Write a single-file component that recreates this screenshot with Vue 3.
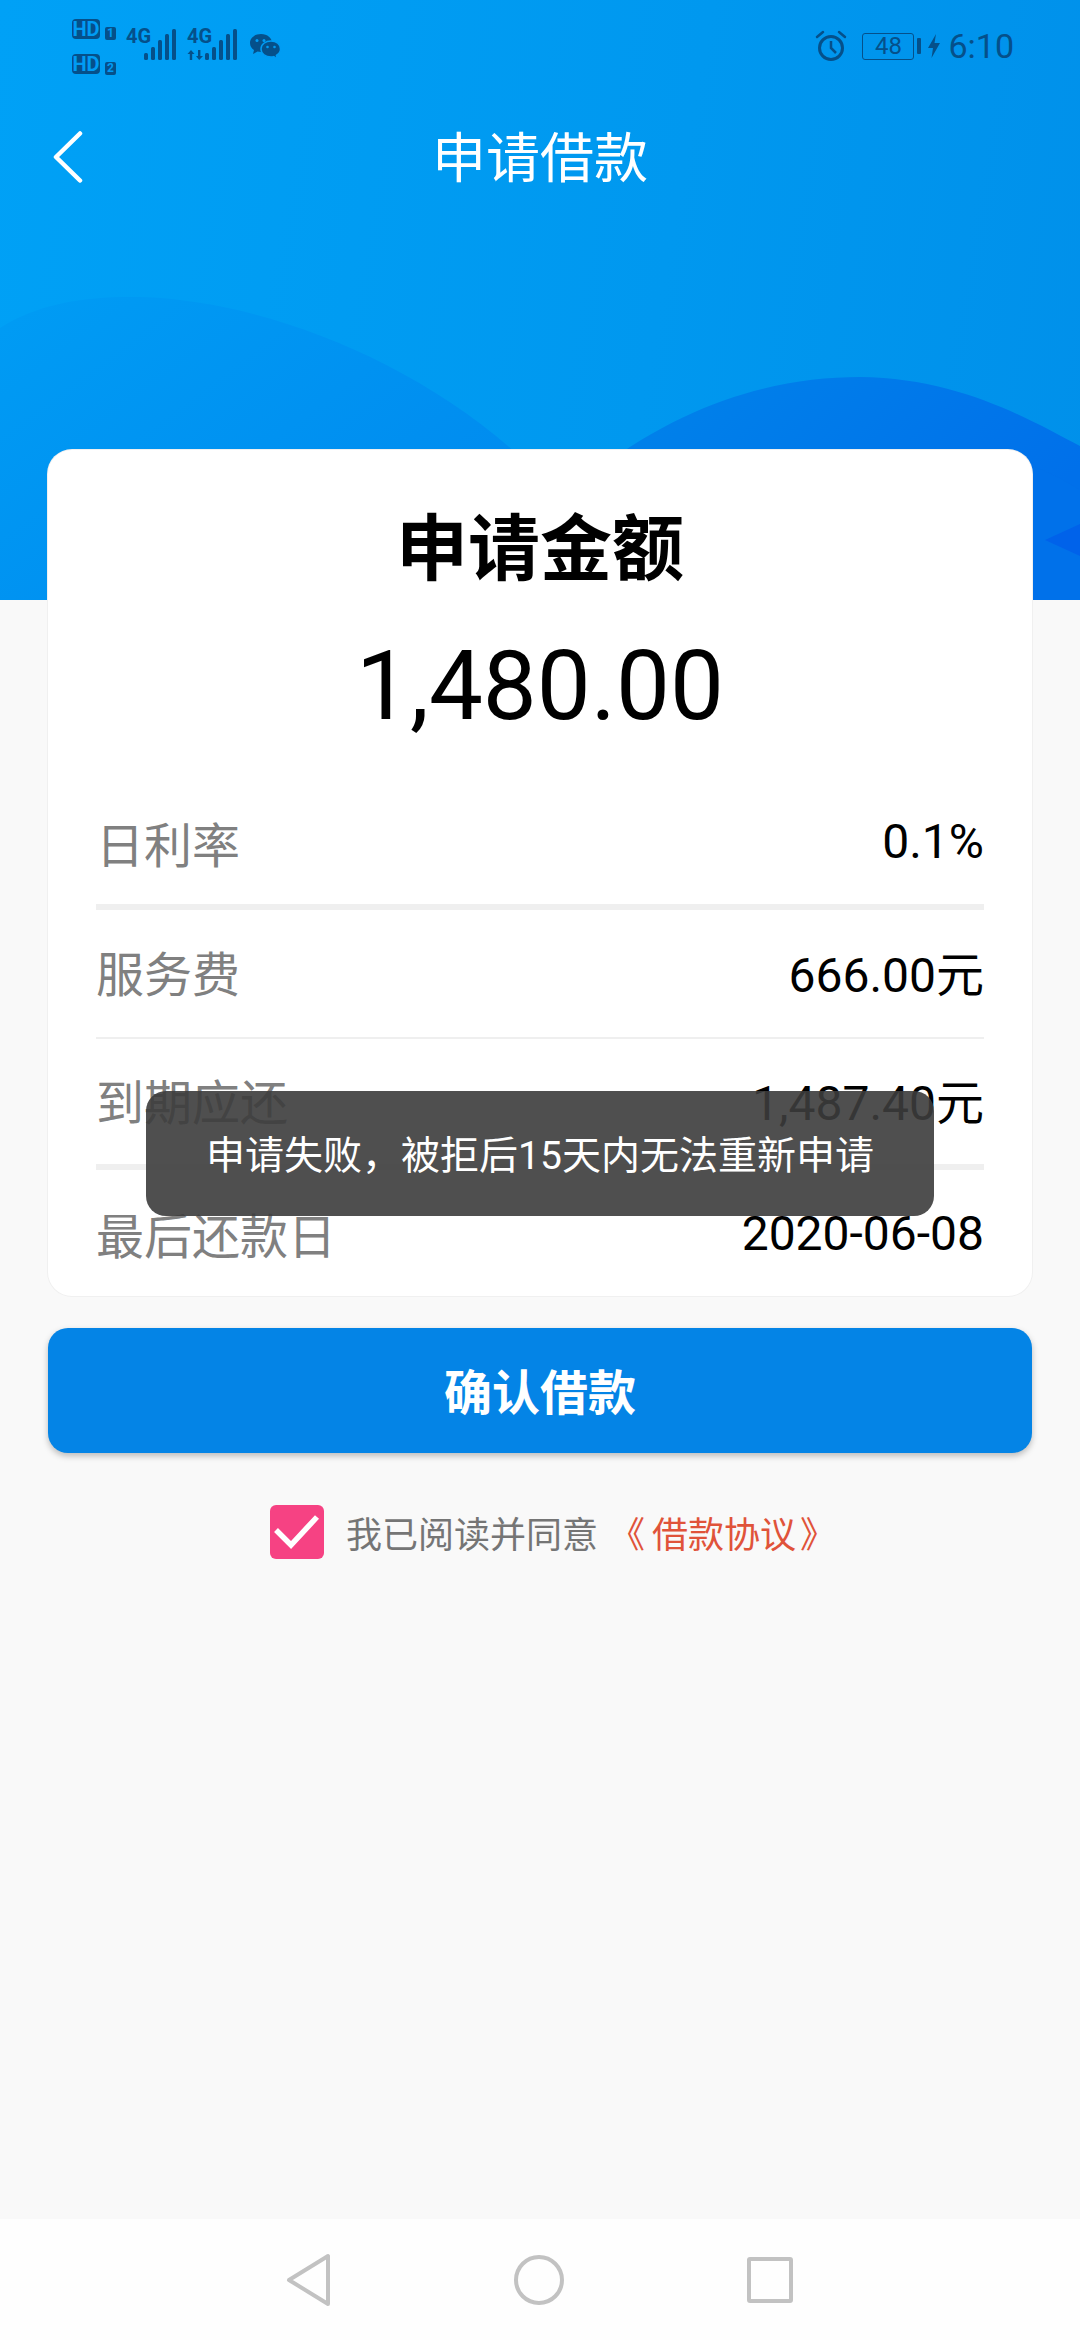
<template>
  <div class="page">
    <header class="hero">
      <svg class="waves" viewBox="0 0 1080 600" preserveAspectRatio="none">
        <defs>
          <linearGradient id="waveA" x1="0" y1="0" x2="1" y2="0.6">
            <stop offset="0" stop-color="#009cf4" />
            <stop offset="1" stop-color="#0088ee" />
          </linearGradient>
          <linearGradient id="waveB" x1="0" y1="0" x2="1" y2="0.4">
            <stop offset="0" stop-color="#0088ea" />
            <stop offset="1" stop-color="#0070ea" />
          </linearGradient>
        </defs>
        <path d="M0 328C40 302 90 296 140 297C260 300 420 360 530 466C590 524 640 570 680 600H0Z" fill="url(#waveA)" />
        <path d="M600 468C690 400 780 377 860 377C960 378 1030 420 1080 446V600H480C520 560 560 500 600 468Z" fill="url(#waveB)" />
        <path d="M1080 490C1050 470 1000 450 960 450L1040 600H1080Z" fill="#0072ea" opacity="0.5" />
        <path d="M1080 524L1045 540L1080 556Z" fill="#0062ea" />
      </svg>

      <div class="status-bar">
        <div class="status-left">
          <div class="hd-stack">
            <div class="hd-line"><span class="hd">HD</span><span class="sim">1</span></div>
            <div class="hd-line"><span class="hd">HD</span><span class="sim">2</span></div>
          </div>
          <div class="signal" v-for="(sig, i) in signals" :key="i">
            <span class="net">4G</span>
            <svg class="arrows" v-if="sig.arrows" viewBox="0 0 18 10" fill="#05508a">
              <path d="M4 0L7.500 4H5.200V10H2.800V4H0.500Z" />
              <path d="M11 0H13.400V6H16L12.200 10L9 6H11Z" />
            </svg>
            <svg class="bars" viewBox="0 0 33 31" fill="#05508a">
              <rect v-for="b in bars" :key="b.x" :x="b.x" :y="31 - b.h" width="4" :height="b.h" rx="1.500" />
            </svg>
          </div>
          <svg class="wechat" viewBox="0 0 32 27">
            <path d="M12 1C5.500 1 1 5 1 10C1 13 2.600 15.500 5 17L4 21L8.500 18.600C9.600 18.900 10.800 19 12 19C18.500 19 23 15 23 10C23 5 18.500 1 12 1Z" fill="#05508a" />
            <path d="M22 8C16.500 8 12 11.400 12 16C12 20.600 16.500 24 22 24C23 24 24 23.900 24.800 23.600L28 26L27.400 22.400C29.900 20.900 31.500 18.600 31.500 16C31.500 11.400 27.500 8 22 8Z" fill="#05508a" stroke="#009cf4" stroke-width="1.500" />
            <circle cx="8" cy="7.500" r="1.500" fill="#009cf4" />
            <circle cx="15" cy="7.500" r="1.500" fill="#009cf4" />
            <circle cx="18.500" cy="14" r="1.300" fill="#009cf4" />
            <circle cx="25.500" cy="14" r="1.300" fill="#009cf4" />
          </svg>
        </div>
        <div class="status-right">
          <svg class="alarm" viewBox="0 0 32 32" fill="none" stroke="#05508a">
            <circle cx="16" cy="18" r="11.500" stroke-width="3" />
            <path d="M16 11V18L21 23" stroke-width="2.500" />
            <path d="M2 7L8 2M30 7L24 2" stroke-width="2.500" stroke-linecap="round" />
          </svg>
          <span class="battery">48</span>
          <span class="battery-nub"></span>
          <svg class="bolt" viewBox="0 0 12 24" fill="#05508a">
            <path d="M8 0L0 14H5L3.500 24L12 9H6.500Z" />
          </svg>
          <span class="clock">6:10</span>
        </div>
      </div>

      <div class="topbar">
        <svg class="back" viewBox="0 0 30 52" fill="none" stroke="#fff" stroke-width="4.500" stroke-linecap="round" stroke-linejoin="round">
          <path d="M27 2.500L3 26L27 49.500" />
        </svg>
        <h1>申请借款</h1>
      </div>
    </header>

    <section class="card">
      <h2>申请金额</h2>
      <div class="amount">1,480.00</div>
      <div class="rows">
        <div v-for="row in rows" :key="row.label" class="row" :class="row.kind">
          <span class="label">{{ row.label }}</span>
          <span class="value">{{ row.value }}</span>
        </div>
      </div>
    </section>

    <button class="confirm">确认借款</button>

    <div class="agree">
      <span class="check">
        <svg viewBox="0 0 54 54" fill="none" stroke="#fff" stroke-width="5.500">
          <path d="M6 25L21 40L47 12" />
        </svg>
      </span>
      <span class="agree-text">我已阅读并同意</span>
      <span class="agree-link"><span class="open">《</span>借款协议<span class="close">》</span></span>
    </div>

    <div class="toast">申请失败，被拒后15天内无法重新申请</div>

    <nav class="navbar">
      <svg class="nav-back" viewBox="0 0 46 54" fill="none" stroke="#c2c2c2" stroke-width="4" stroke-linejoin="round">
        <path d="M42 3V51L3 27Z" />
      </svg>
      <svg class="nav-home" viewBox="0 0 54 54" fill="none" stroke="#c2c2c2" stroke-width="4">
        <circle cx="27" cy="27" r="23" />
      </svg>
      <svg class="nav-recent" viewBox="0 0 48 48" fill="none" stroke="#c2c2c2" stroke-width="4" stroke-linejoin="round">
        <rect x="3" y="3" width="42" height="42" rx="1" />
      </svg>
    </nav>
  </div>
</template>

<script setup>
const signals = [{ arrows: false }, { arrows: true }]

const bars = [
  { x: 0, h: 7 },
  { x: 7, h: 13 },
  { x: 14, h: 20 },
  { x: 21, h: 26 },
  { x: 28, h: 31 }
]

const rows = [
  { label: '日利率', value: '0.1%', kind: 'first' },
  { label: '服务费', value: '666.00元', kind: 'second' },
  { label: '到期应还', value: '1,487.40元', kind: 'third' },
  { label: '最后还款日', value: '2020-06-08', kind: 'last' }
]
</script>

<style>
body {
  background: #f9f9f9;
}
</style>

<style scoped>
.page {
  position: relative;
  display: flex;
  flex-direction: column;
  width: 1080px;
  height: 2340px;
  overflow: hidden;
  background: #f9f9f9;
  font-family: Roboto, "Noto Sans CJK SC", sans-serif;
  color: #000;
}

.hero {
  position: relative;
  height: 600px;
  flex: none;
  background: linear-gradient(100deg, #00a1f6 0%, #0098ef 60%, #0090ea 100%);
}

.waves {
  position: absolute;
  left: 0;
  top: 0;
  width: 1080px;
  height: 600px;
}

.status-bar {
  position: relative;
  display: flex;
  justify-content: space-between;
  align-items: flex-start;
  height: 124px;
  padding: 18px 66px 0 72px;
  box-sizing: border-box;
  color: #05508a;
}

.status-left {
  display: flex;
  align-items: flex-start;
}

.hd-stack {
  display: flex;
  flex-direction: column;
  gap: 14px;
  width: 54px;
}

.hd-line {
  display: flex;
  align-items: flex-end;
  gap: 5px;
  height: 21px;
}

.hd {
  display: block;
  width: 28px;
  height: 20px;
  background: #05508a;
  border-radius: 4px;
  color: #009cf4;
  font-family: "Liberation Sans Narrow", Roboto, sans-serif;
  font-size: 20px;
  font-weight: 700;
  line-height: 20px;
  text-align: center;
}

.sim {
  display: block;
  width: 11px;
  height: 13px;
  margin-bottom: -1px;
  background: #05508a;
  border-radius: 2px;
  color: #009cf4;
  font-size: 12px;
  font-weight: 700;
  line-height: 13px;
  text-align: center;
}

.signal {
  position: relative;
  width: 51px;
  height: 32px;
  margin-top: 10px;
  margin-right: 10px;
}

.signal:last-of-type {
  margin-right: 0;
}

.net {
  position: absolute;
  left: 0;
  top: 0;
  font-family: "Liberation Sans Narrow", Roboto, sans-serif;
  font-size: 20px;
  font-weight: 700;
  line-height: 17px;
}

.arrows {
  position: absolute;
  left: 0;
  bottom: 0;
  width: 18px;
  height: 10px;
}

.bars {
  position: absolute;
  left: 18px;
  bottom: 0;
  width: 33px;
  height: 31px;
}

.wechat {
  width: 32px;
  height: 27px;
  margin: 15px 0 0 11px;
}

.status-right {
  display: flex;
  align-items: center;
  height: 44px;
  margin-top: 6px;
}

.alarm {
  width: 32px;
  height: 32px;
  margin-right: 15px;
}

.battery {
  display: block;
  width: 52px;
  height: 27px;
  border: 1.5px solid #05508a;
  border-radius: 3px;
  box-sizing: border-box;
  font-size: 24px;
  line-height: 24px;
  text-align: center;
}

.battery-nub {
  display: block;
  width: 4px;
  height: 16px;
  margin-left: 3px;
  background: #05508a;
  border-radius: 1px;
}

.bolt {
  width: 12px;
  height: 24px;
  margin-left: 7px;
}

.clock {
  margin-left: 8px;
  font-size: 34px;
  line-height: 44px;
}

.topbar {
  position: relative;
  display: flex;
  justify-content: center;
  align-items: center;
  height: 72px;
}

.back {
  position: absolute;
  left: 53px;
  top: 7px;
  width: 30px;
  height: 52px;
}

.topbar h1 {
  margin: 0;
  color: #fff;
  font-size: 54px;
  font-weight: 400;
  line-height: 72px;
}

.card {
  position: relative;
  flex: none;
  height: 846px;
  margin: -150px 48px 0;
  padding: 50px 48px 0;
  box-sizing: border-box;
  background: #fff;
  border-radius: 24px;
  box-shadow: 0 0 0 1px #f0f0f0;
  text-align: center;
}

.card h2 {
  margin: 0;
  font-size: 72px;
  font-weight: 700;
  line-height: 100px;
}

.amount {
  margin-top: 30px;
  font-size: 96px;
  line-height: 112px;
}

.rows {
  margin-top: 40px;
}

.row {
  display: flex;
  justify-content: space-between;
  align-items: center;
  box-sizing: border-box;
}

.row.first {
  height: 128px;
  padding-bottom: 3px;
  border-bottom: 6px solid #efefef;
}

.row.second {
  height: 129px;
  padding-bottom: 6px;
  border-bottom: 2px solid #efefef;
}

.row.third {
  height: 131px;
  padding-bottom: 6px;
  border-bottom: 6px solid #efefef;
}

.row.last {
  height: 126px;
}

.label {
  color: #808080;
  font-size: 48px;
}

.value {
  font-size: 48px;
}

.confirm {
  flex: none;
  display: block;
  height: 125px;
  margin: 32px 48px 0;
  padding: 0 0 3px;
  border: none;
  border-radius: 20px;
  background: #0484e6;
  box-shadow: 0 3px 6px rgba(0, 0, 0, 0.25);
  color: #fff;
  font-family: inherit;
  font-size: 48px;
  font-weight: 700;
}

.agree {
  display: flex;
  align-items: center;
  height: 54px;
  margin-top: 52px;
  padding-left: 270px;
}

.check {
  display: block;
  width: 54px;
  height: 54px;
  margin-right: 22px;
  background: #f64283;
  border-radius: 6px;
}

.check svg {
  display: block;
  width: 54px;
  height: 54px;
}

.agree-text {
  color: #757575;
  font-size: 36px;
}

.agree-link {
  margin-left: 11px;
  color: #e0533a;
  font-size: 36px;
}

.open {
  margin-right: 7px;
}

.close {
  margin-left: 4px;
}

.toast {
  position: absolute;
  left: 146px;
  top: 1091px;
  width: 788px;
  height: 125px;
  background: rgba(60, 60, 60, 0.9);
  border-radius: 20px;
  color: #fff;
  font-size: 39px;
  line-height: 130px;
  text-align: center;
}

.navbar {
  flex: none;
  display: flex;
  justify-content: center;
  align-items: center;
  gap: 180px;
  height: 121px;
  margin-top: auto;
  background: #fefefe;
}

.nav-back {
  display: block;
  width: 46px;
  height: 54px;
}

.nav-home {
  display: block;
  width: 54px;
  height: 54px;
}

.nav-recent {
  display: block;
  width: 48px;
  height: 48px;
}
</style>
